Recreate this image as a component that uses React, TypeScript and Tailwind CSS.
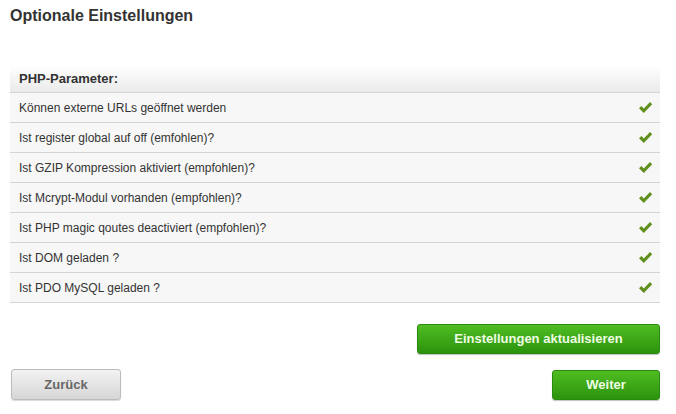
const rows = [
  'Können externe URLs geöffnet werden',
  'Ist register global auf off (emfohlen)?',
  'Ist GZIP Kompression aktiviert (empfohlen)?',
  'Ist Mcrypt-Modul vorhanden (empfohlen)?',
  'Ist PHP magic qoutes deactiviert (empfohlen)?',
  'Ist DOM geladen ?',
  'Ist PDO MySQL geladen ?',
];

const Check = () => (
  <svg width="15" height="13" viewBox="0 0 15 13" className="shrink-0">
    <path d="M1 7.2 L3.4 5 L5.8 7.6 L12 1 L14.2 3.2 L5.8 12 Z" fill="#5f8f1c" />
  </svg>
);

export default function App() {
  return (
    <div className="w-[676px] h-[414px] bg-white font-['Liberation_Sans',Arial,sans-serif] text-[#333]">
      <div className="w-[670px] pl-[10px] pt-[6px]">
        <h1 className="text-[16px] font-bold leading-[20px] text-[#333]">Optionale Einstellungen</h1>

        <div className="mt-[40px] w-[650px]">
          {/* Header */}
          <div className="h-[27px] flex items-center px-[9px] bg-gradient-to-b from-white to-[#eaeaea] border-b border-[#d4d4d4]">
            <span className="text-[13px] font-bold">PHP-Parameter:</span>
          </div>
          {rows.map((r) => (
            <div
              key={r}
              className="h-[30px] flex items-center justify-between pl-[9px] pr-[7px] bg-[#f7f7f7] border-b border-[#d4d4d4]"
            >
              <span className="text-[12px]">{r}</span>
              <Check />
            </div>
          ))}
        </div>

        <div className="w-[650px] flex justify-end mt-[21px]">
          <button className="w-[243px] h-[30px] rounded-[3px] border border-[#2a8a10] bg-gradient-to-b from-[#4fbd22] to-[#2b930c] text-[13px] font-bold text-[#effde4] shadow-[0_1px_1px_rgba(0,0,0,0.25)]">
            Einstellungen aktualisieren
          </button>
        </div>

        <div className="w-[650px] flex justify-between items-center mt-[15px]">
          <button className="ml-px w-[110px] h-[31px] rounded-[3px] border border-[#bcbcbc] bg-gradient-to-b from-[#f2f2f2] to-[#d6d6d6] text-[13px] font-bold text-[#666] shadow-[0_1px_1px_rgba(0,0,0,0.15)]">
            Zurück
          </button>
          <button className="w-[108px] h-[30px] rounded-[3px] border border-[#2a8a10] bg-gradient-to-b from-[#4fbd22] to-[#2b930c] text-[13px] font-bold text-[#effde4] shadow-[0_1px_1px_rgba(0,0,0,0.25)]">
            Weiter
          </button>
        </div>
      </div>
    </div>
  );
}
